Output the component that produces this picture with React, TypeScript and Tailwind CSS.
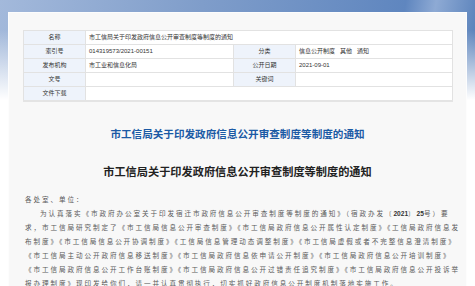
import React from 'react'

const sans = "font-['Liberation_Sans','Noto_Sans_CJK_SC',sans-serif]"

type Row = { label: string; value: string; label2?: string; value2?: string }

const rows: Row[] = [
  { label: '名称', value: '市工信局关于印发政府信息公开审查制度等制度的通知' },
  { label: '索引号', value: '014319573/2021-00151', label2: '分类', value2: '信息公开制度\u00a0\u00a0\u00a0其他\u00a0\u00a0\u00a0通知' },
  { label: '发布机构', value: '市工业和信息化局', label2: '公开日期', value2: '2021-09-01' },
  { label: '文号', value: '', label2: '关键词', value2: '' },
  { label: '文件下载', value: '' },
]

const lines = [
  '求，市工信局研究制定了《市工信局信息公开审查制度》《市工信局政府信息公开属性认定制度》《工信局政府信息发',
  '布制度》《市工信局信息公开协调制度》《工信局信息管理动态调整制度》《市工信局虚假或者不完整信息澄清制度》',
  '《市工信局主动公开政府信息移送制度》《市工信局政府信息依申请公开制度》《市工信局政府信息公开培训制度》',
  '《市工信局政府信息公开工作台账制度》《市工信局政府信息公开过错责任追究制度》《市工信局政府信息公开投诉举',
]

export default function App() {
  return (
    <div className={`w-[475px] h-[286px] overflow-hidden bg-[linear-gradient(100deg,#a3b9db_0px,#7f9dca_200px,#5f86bf_400px,#8eaad4_430px,#5a82bb_475px)] ${sans}`}>
      <div className="w-[475px] h-[286px] bg-[linear-gradient(180deg,transparent_0px,transparent_30px,#ffffff_100px)] pt-3 pl-2">
        <div className="w-[459px] h-[300px] bg-[#f8f8f8] border border-[#fdfdfd] pt-[17px] pl-[14px]">
          {/* info table */}
          <table className="w-[429px] table-fixed border-collapse text-[6px] text-[#333] border-b-2 border-b-[#e4e4e4]">
            <colgroup>
              <col className="w-[62px]" />
              <col className="w-[148px]" />
              <col className="w-[62px]" />
              <col className="w-[157px]" />
            </colgroup>
            <tbody>
              {rows.map((r) => (
                <tr key={r.label} className="h-[14px]">
                  <td className="border border-[#e2e2e2] bg-[#eef3fb] text-center">{r.label}</td>
                  {r.label2 === undefined ? (
                    <td colSpan={3} className="border border-[#e2e2e2] bg-white pl-[3px]">{r.value}</td>
                  ) : (
                    <>
                      <td className="border border-[#e2e2e2] bg-white pl-[3px]">{r.value}</td>
                      <td className="border border-[#e2e2e2] bg-[#eef3fb] text-center">{r.label2}</td>
                      <td className="border border-[#e2e2e2] bg-white pl-[3px]">{r.value2}</td>
                    </>
                  )}
                </tr>
              ))}
            </tbody>
          </table>

          <h1 className="mt-[25px] pr-[14px] text-center text-[10.6px] leading-[14px] font-bold text-[#1b5aa5]">
            市工信局关于印发政府信息公开审查制度等制度的通知
          </h1>
          <h2 className="mt-[24px] pr-[14px] text-center text-[11.2px] leading-[14px] font-bold text-[#222]">
            市工信局关于印发政府信息公开审查制度等制度的通知
          </h2>

          <div className="mt-[14px] w-[427px] ml-[2px] text-[6.6px] leading-[14px] text-[#5a5a5a] tracking-[1.9px]">
            <p>各处室、单位：</p>
            <p className="pl-[15px] whitespace-nowrap">
              为认真落实《市政府办公室关于印发宿迁市政府信息公开审查制度等制度的通知》（宿政办发〔<span className="font-bold tracking-normal text-[#333]">2021</span>〕<span className="font-bold tracking-normal text-[#333]">25</span>号）要
            </p>
            {lines.map((l) => (
              <p key={l} className="whitespace-nowrap">{l}</p>
            ))}
            <p className="whitespace-nowrap">报办理制度》现印发给你们，请一并认真贯彻执行，切实抓好政府信息公开制度机制落地实施工作。</p>
          </div>
        </div>
      </div>
    </div>
  )
}
